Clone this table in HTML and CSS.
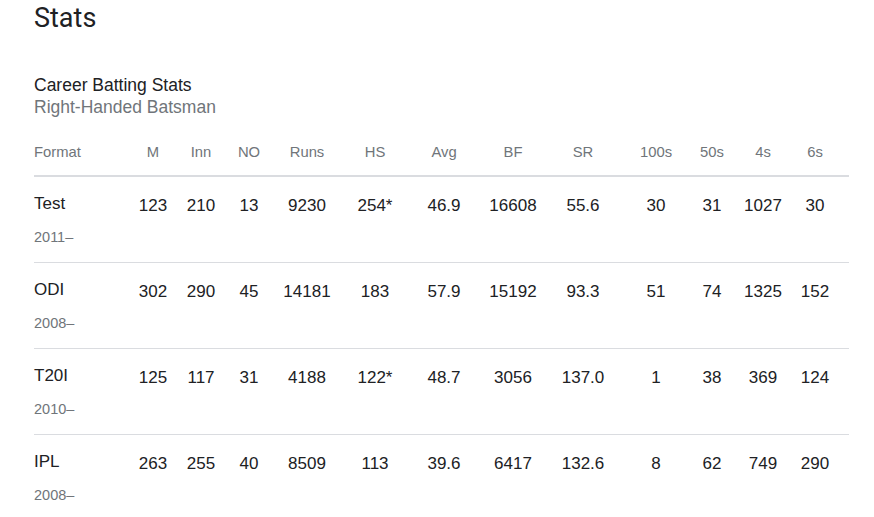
FILE: index.html
```html
<!DOCTYPE html>
<html>
<head>
<meta charset="utf-8">
<link rel="stylesheet" href="styles.css">
</head>
<body>
<div class="page">
  <h1 class="title">Stats</h1>
  <div class="subhead">
    <div class="sub-title">Career Batting Stats</div>
    <div class="sub-desc">Right-Handed Batsman</div>
  </div>
  <div class="table">
    <div class="row head">
      <div class="fmt">Format</div><div>M</div><div>Inn</div><div>NO</div><div>Runs</div><div>HS</div><div>Avg</div><div>BF</div><div>SR</div><div>100s</div><div>50s</div><div>4s</div><div>6s</div>
    </div>
    <div class="row body">
      <div class="fmt"><div class="name">Test</div><div class="year">2011–</div></div>
      <div>123</div><div>210</div><div>13</div><div>9230</div><div>254*</div><div>46.9</div><div>16608</div><div>55.6</div><div>30</div><div>31</div><div>1027</div><div>30</div>
    </div>
    <div class="row body">
      <div class="fmt"><div class="name">ODI</div><div class="year">2008–</div></div>
      <div>302</div><div>290</div><div>45</div><div>14181</div><div>183</div><div>57.9</div><div>15192</div><div>93.3</div><div>51</div><div>74</div><div>1325</div><div>152</div>
    </div>
    <div class="row body">
      <div class="fmt"><div class="name">T20I</div><div class="year">2010–</div></div>
      <div>125</div><div>117</div><div>31</div><div>4188</div><div>122*</div><div>48.7</div><div>3056</div><div>137.0</div><div>1</div><div>38</div><div>369</div><div>124</div>
    </div>
    <div class="row body last">
      <div class="fmt"><div class="name">IPL</div><div class="year">2008–</div></div>
      <div>263</div><div>255</div><div>40</div><div>8509</div><div>113</div><div>39.6</div><div>6417</div><div>132.6</div><div>8</div><div>62</div><div>749</div><div>290</div>
    </div>
  </div>
</div>
</body>
</html>
```
FILE: styles.css
```css
html, body {
  margin: 0;
  padding: 0;
  background: #ffffff;
}
.page {
  padding: 0 25px 0 34px;
  font-family: "Liberation Sans", Arial, sans-serif;
  color: #202124;
}
.title {
  margin: 0;
  font-family: Roboto, "Liberation Sans", sans-serif;
  font-weight: 400;
  font-size: 27px;
  line-height: 36px;
  color: #202124;
}
.subhead {
  margin-top: 38px;
  font-family: "Liberation Sans", Arial, sans-serif;
  font-size: 17.5px;
  line-height: 22px;
}
.sub-title {
  color: #202124;
}
.sub-desc {
  color: #70757a;
}
.table {
  margin-top: 25px;
  width: 815px;
}
.row {
  display: grid;
  grid-template-columns: 95px 48px 48px 48px 68px 68px 70px 68px 72px 74px 38px 64px 40px;
  text-align: center;
}
.row .fmt {
  text-align: left;
}
.head {
  font-size: 14.8px;
  color: #70757a;
  line-height: 18px;
  padding-bottom: 14px;
  border-bottom: 2px solid #dadce0;
}
.body {
  font-size: 17px;
  line-height: 20px;
  padding: 17px 0 0;
  height: 68px;
  border-bottom: 1px solid #dadce0;
}
.body > div:not(.fmt) {
  padding-top: 2px;
}
.body.last {
  border-bottom: none;
}
.name {
  font-size: 17px;
  line-height: 20px;
}
.year {
  margin-top: 14px;
  font-size: 14.5px;
  line-height: 18px;
  color: #70757a;
}
```
